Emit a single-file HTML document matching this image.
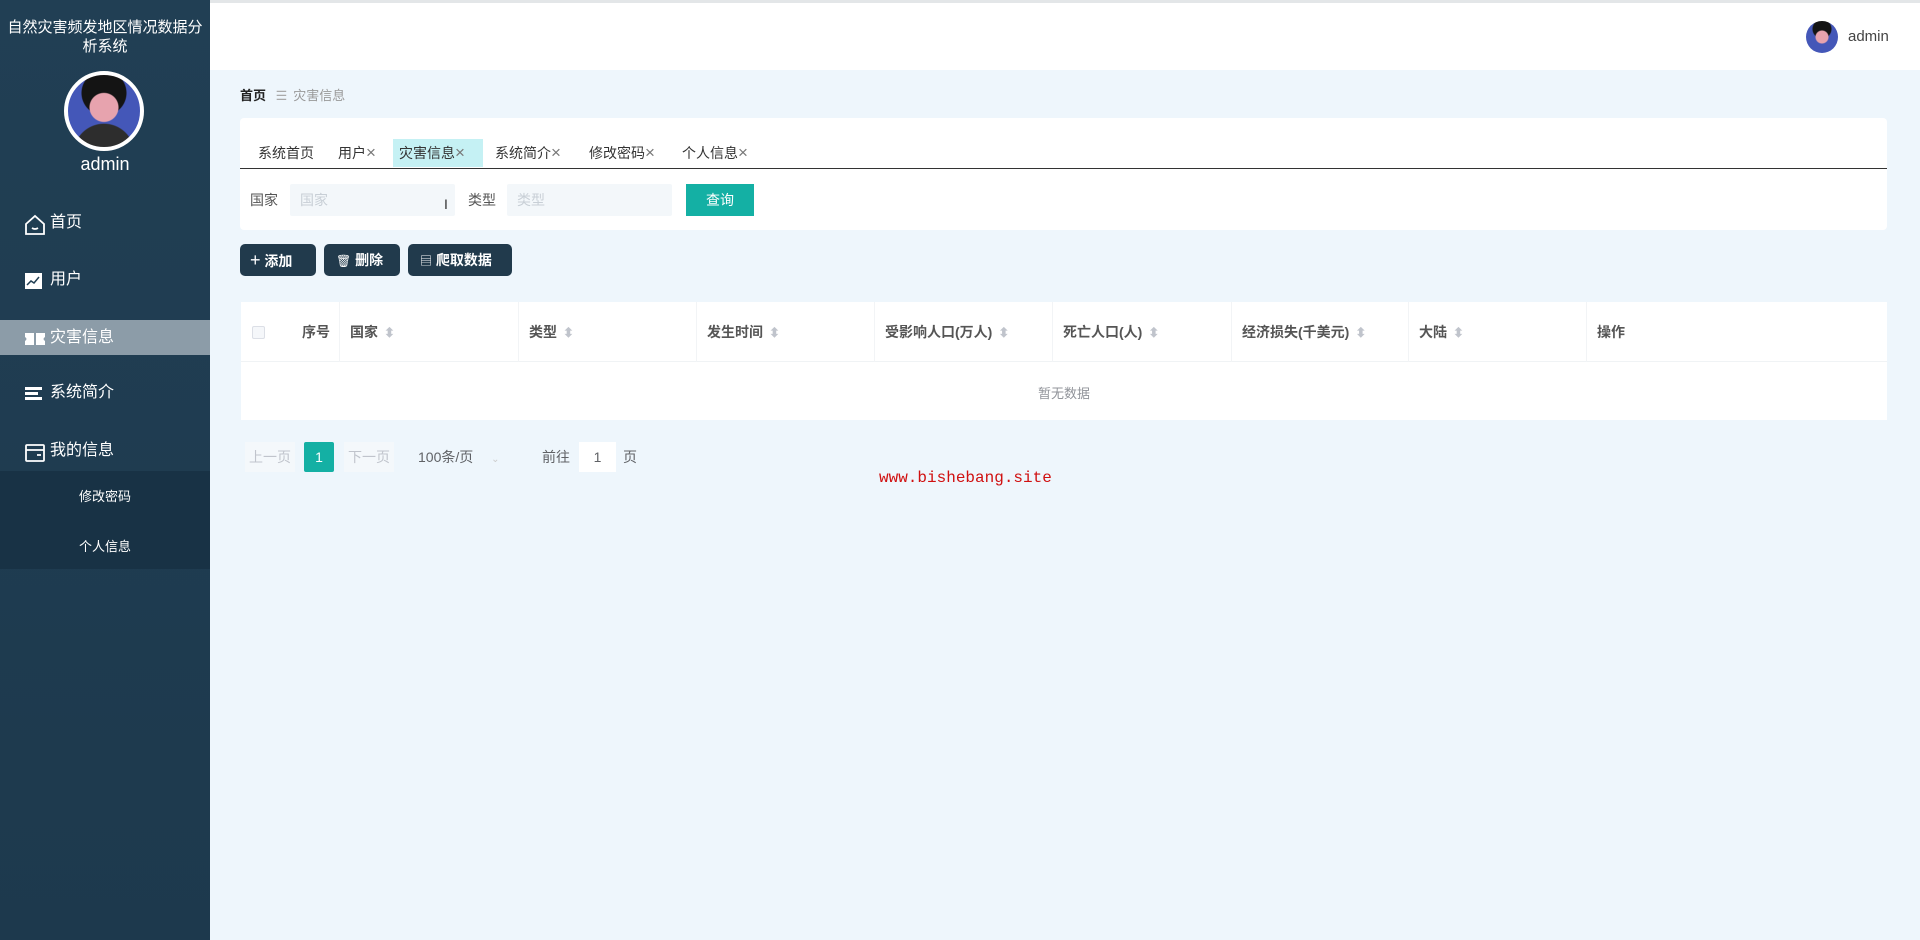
<!DOCTYPE html>
<html><head><meta charset="utf-8"><style>
*{box-sizing:border-box;margin:0;padding:0}
body{width:1920px;height:940px;overflow:hidden;font-family:"Liberation Sans","Noto Sans CJK SC",sans-serif;background:#eef6fc;position:relative;color:#333}
.abs{position:absolute}
#side{left:0;top:0;width:210px;height:940px;background:linear-gradient(#213f54,#1d394d)}
#side .t{left:0;top:18px;width:210px;text-align:center;color:#fff;font-size:15px;line-height:19px;padding:0 6px}
.mi{left:0;width:210px;height:36px;color:#fff;font-size:16px;line-height:36px;padding-left:50px}
.mi svg{position:absolute;left:24px;top:9px}
#top{left:210px;top:0;width:1710px;height:70px;background:#fff;border-top:3px solid #e3e6e8}
.card{background:#fff;border-radius:4px}
.tab{top:139px;height:28px;line-height:28px;font-size:14px;color:#333;padding:0 6px}
.x{color:#777;font-size:17px;font-weight:300}
.inp{background:#f3f7fa;height:32px;border-radius:2px;color:#c8cfd6;font-size:14px;line-height:32px;padding-left:10px}
.btn{top:244px;height:32px;background:#213a4c;border-radius:5px;color:#fff;font-size:14px;line-height:32px;font-weight:bold}
.th{top:302px;height:60px;line-height:60px;font-size:14px;font-weight:bold;color:#555;border-right:1px solid #f2f4f6;padding-left:10px}
.s{color:#c0c4cc;font-size:13px;margin-left:6px}
.pg{top:442px;font-size:14px;line-height:30px;height:30px}
</style></head><body>
<div id="side" class="abs">
<div class="t abs">自然灾害频发地区情况数据分析系统</div>
<div class="abs" style="left:64px;top:71px;width:80px;height:80px;border-radius:50%;border:4px solid #fff;background:radial-gradient(circle at 50% 45%,#e7a3ae 0 14px,transparent 15px),radial-gradient(circle at 50% 25%,#141414 0 22px,transparent 23px),radial-gradient(circle at 50% 110%,#2d2d2d 0 30px,transparent 31px),#4457b8"></div>
<div class="abs" style="left:0;top:154px;width:210px;text-align:center;color:#fff;font-size:18px">admin</div>
<div class="mi abs" style="top:205px"><svg width="22" height="22" viewBox="0 0 22 22" fill="none" stroke="#fff" stroke-width="1.8"><path d="M2 10 L11 2 L20 10 V20 H2 Z M8 14 Q11 16 14 14"/></svg>首页</div>
<div class="mi abs" style="top:262px"><svg width="20" height="20" viewBox="0 0 20 20"><rect x="1" y="2" width="17" height="16" fill="#fff"/><path d="M3 14 L7 10 L10 12 L15 6" stroke="#213f54" stroke-width="1.5" fill="none"/></svg>用户</div>
<div class="mi abs" style="top:320px;height:35px;background:#8c9ca8"><svg width="22" height="20" viewBox="0 0 22 20"><path d="M1 4 H21 V8 Q18 10 21 12 V16 H1 V12 Q4 10 1 8 Z" fill="#fff"/><path d="M11 4 V16" stroke="#8c9ca8" stroke-width="2"/></svg>灾害信息</div>
<div class="mi abs" style="top:375px"><svg width="20" height="20" viewBox="0 0 20 20" fill="#fff"><rect x="1" y="3" width="17" height="3"/><rect x="1" y="8" width="13" height="3"/><rect x="1" y="13" width="17" height="3"/></svg>系统简介</div>
<div class="mi abs" style="top:433px"><svg width="22" height="22" viewBox="0 0 22 22" fill="none" stroke="#fff" stroke-width="1.8"><rect x="2" y="3" width="18" height="16" rx="1"/><path d="M2 8 H20 M13 13 H17"/></svg>我的信息</div>
<div class="abs" style="left:0;top:471px;width:210px;height:98px;background:#183245"></div>
<div class="abs" style="left:0;top:486px;width:210px;text-align:center;color:#fff;font-size:13px">修改密码</div>
<div class="abs" style="left:0;top:536px;width:210px;text-align:center;color:#fff;font-size:13px">个人信息</div>
</div>
<div id="top" class="abs"></div>
<div class="abs" style="left:1806px;top:21px;width:32px;height:32px;border-radius:50%;background:radial-gradient(circle at 50% 50%,#e7a3ae 0 6px,transparent 7px),radial-gradient(circle at 50% 25%,#141414 0 9px,transparent 10px),#4457b8"></div>
<div class="abs" style="left:1848px;top:28px;font-size:15px;color:#444">admin</div>
<div class="abs" style="left:240px;top:85px;font-size:13px"><b style="color:#222">首页</b> <span style="color:#aaa;margin:0 6px">☰</span><span style="color:#999">灾害信息</span></div>
<div class="card abs" style="left:240px;top:118px;width:1647px;height:112px"></div>
<div class="abs" style="left:240px;top:168px;width:1647px;height:1px;background:#333"></div>
<div class="tab abs" style="left:252px">系统首页</div>
<div class="tab abs" style="left:332px">用户<span class="x">×</span></div>
<div class="tab abs" style="left:393px;width:90px;background:#c5f1f4">灾害信息<span class="x">×</span></div>
<div class="tab abs" style="left:489px">系统简介<span class="x">×</span></div>
<div class="tab abs" style="left:583px">修改密码<span class="x">×</span></div>
<div class="tab abs" style="left:676px">个人信息<span class="x">×</span></div>
<div class="abs" style="left:250px;top:190px;font-size:14px;color:#555">国家</div>
<div class="inp abs" style="left:290px;top:184px;width:165px">国家</div>
<div class="abs" style="left:444px;top:196px;font-size:14px;color:#333">I</div>
<div class="abs" style="left:468px;top:190px;font-size:14px;color:#555">类型</div>
<div class="inp abs" style="left:507px;top:184px;width:165px">类型</div>
<div class="abs" style="left:686px;top:184px;width:68px;height:32px;background:#14b0a4;color:#fff;font-size:14px;line-height:32px;text-align:center">查询</div>
<div class="btn abs" style="left:240px;width:76px;padding-left:10px"><span style="font-size:18px;font-weight:normal">+</span> 添加</div>
<div class="btn abs" style="left:324px;width:76px;padding-left:12px"><span style="font-weight:normal;font-size:12px">🗑</span> 删除</div>
<div class="btn abs" style="left:408px;width:104px;padding-left:12px"><span style="font-weight:normal;font-size:12px">▤</span> 爬取数据</div>
<div class="card abs" style="left:241px;top:302px;width:1646px;height:118px;border-radius:0"></div>
<div class="abs" style="left:241px;top:361px;width:1646px;height:1px;background:#f0f3f5"></div>
<div class="abs" style="left:252px;top:326px;width:13px;height:13px;border:1px solid #dcdfe6;border-radius:2px;background:#f5f7fa"></div>
<div class="th abs" style="left:291px;width:49px;padding-left:11px">序号</div>
<div class="th abs" style="left:340px;width:179px">国家<span class="s">⬍</span></div>
<div class="th abs" style="left:519px;width:178px">类型<span class="s">⬍</span></div>
<div class="th abs" style="left:697px;width:178px">发生时间<span class="s">⬍</span></div>
<div class="th abs" style="left:875px;width:178px">受影响人口(万人)<span class="s">⬍</span></div>
<div class="th abs" style="left:1053px;width:179px">死亡人口(人)<span class="s">⬍</span></div>
<div class="th abs" style="left:1232px;width:177px">经济损失(千美元)<span class="s">⬍</span></div>
<div class="th abs" style="left:1409px;width:178px">大陆<span class="s">⬍</span></div>
<div class="th abs" style="left:1587px;width:300px;border:none">操作</div>
<div class="abs" style="left:241px;top:383px;width:1646px;text-align:center;font-size:13px;color:#909399">暂无数据</div>
<div class="pg abs" style="left:245px;width:50px;background:#f4f8fb;color:#c0c4cc;text-align:center">上一页</div>
<div class="pg abs" style="left:304px;width:30px;background:#14b0a4;color:#fff;text-align:center;border-radius:2px">1</div>
<div class="pg abs" style="left:344px;width:50px;background:#f4f8fb;color:#c0c4cc;text-align:center">下一页</div>
<div class="pg abs" style="left:418px;color:#606266">100条/页 <span style="color:#ccc;font-size:10px;margin-left:14px">⌄</span></div>
<div class="pg abs" style="left:542px;color:#606266">前往</div>
<div class="pg abs" style="left:579px;width:37px;background:#fff;text-align:center;color:#606266">1</div>
<div class="pg abs" style="left:623px;color:#606266">页</div>
<div class="abs" style="left:879px;top:469px;font-family:'Liberation Mono',monospace;font-size:16px;color:#d01010">www.bishebang.site</div>
</body></html>
